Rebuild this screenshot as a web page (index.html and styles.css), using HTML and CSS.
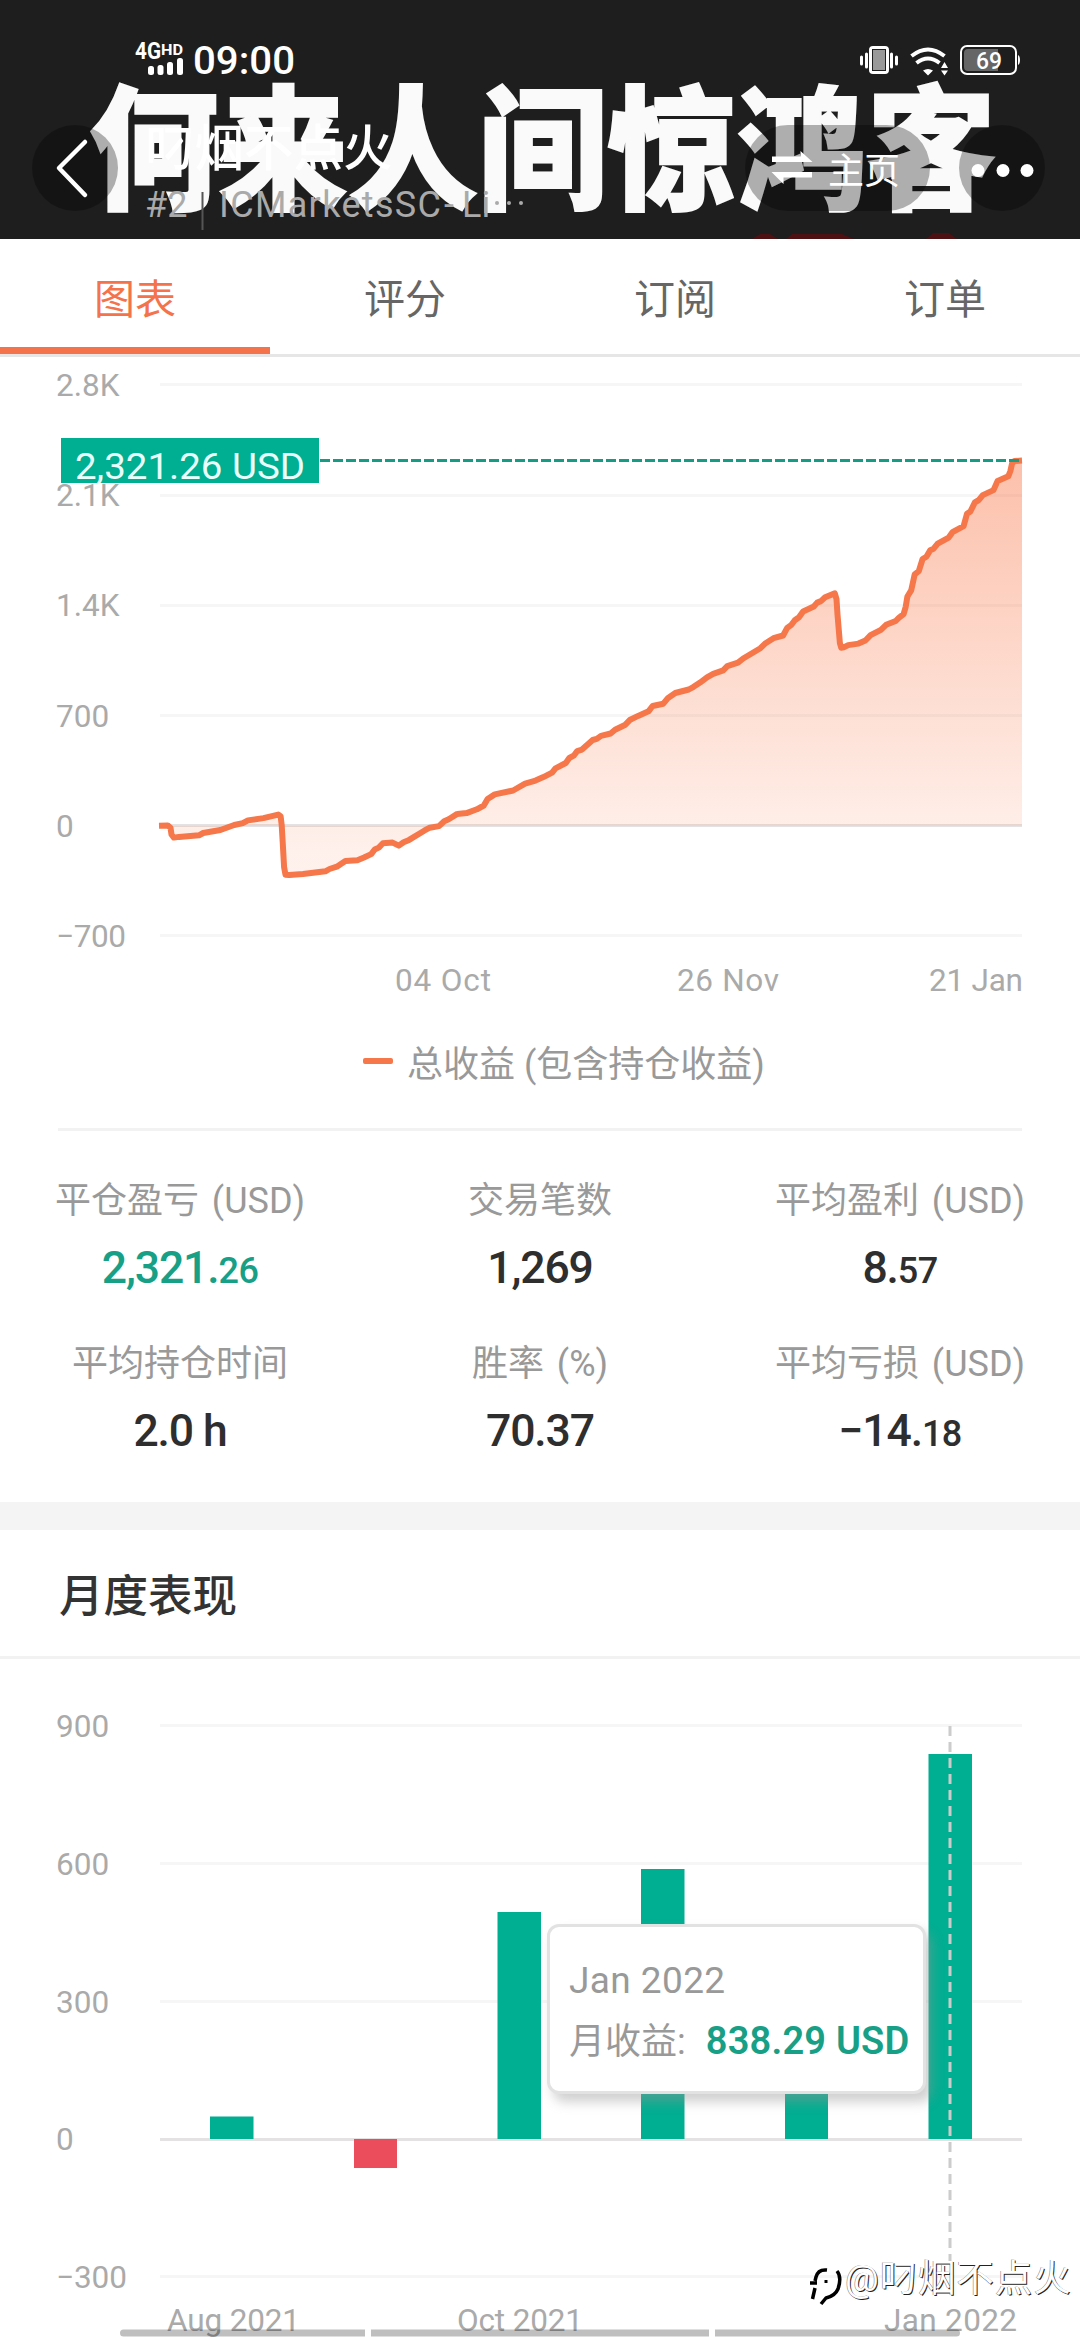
FILE: index.html
```html
<!DOCTYPE html>
<html lang="zh-CN">
<head>
<meta charset="utf-8">
<title>图表</title>
<link rel="stylesheet" href="styles.css">
</head>
<body>
<div class="screen">
  <header class="hero">
    <svg class="banner" width="1080" height="239" viewBox="0 0 1080 239">
      <text x="89" y="199" textLength="907" lengthAdjust="spacingAndGlyphs">何来人间惊鸿客</text>
      <path class="banner-red" d="M752 239l8-5h10l8 5zM786 239l6-5h50l12 5zM926 239l7-6h16l8 6z"/>
    </svg>

    <div class="status">
      <svg width="170" height="40" viewBox="130 40 170 40" fill="#fff">
        <text class="net" x="135" y="59" textLength="26" lengthAdjust="spacingAndGlyphs">4G</text>
        <text class="hd" x="161" y="55" textLength="22" lengthAdjust="spacingAndGlyphs">HD</text>
        <rect x="148" y="66" width="6" height="9" rx="2.500"/>
        <rect x="157.500" y="65" width="6" height="10" rx="2.500"/>
        <rect x="167" y="62" width="6" height="13" rx="2.500"/>
        <rect x="177" y="58" width="6" height="17" rx="2.500"/>
        <text class="time" x="193" y="74" textLength="102" lengthAdjust="spacingAndGlyphs">09:00</text>
      </svg>
      <svg width="170" height="40" viewBox="855 40 170 40" fill="#fff">
        <rect x="870.500" y="47.500" width="17" height="25" rx="2.500" fill="#999" stroke="#fff" stroke-width="3"/>
        <rect x="872.500" y="49.500" width="13" height="21" fill="none" stroke="#1e1e1e" stroke-width="1"/>
        <path d="M866.500 54v13M861.500 57v7M891.500 54v13M896.500 57v7" stroke="#fff" stroke-width="3" stroke-linecap="round"/>
        <g fill="none" stroke="#fff" stroke-width="4">
          <path d="M911.500 56q16.500-13 33 0"/><path d="M916.500 63q11.500-9 23 0"/>
        </g>
        <path d="M923 70.500q5-3 10 0l-5 5zM941 68l3.500-6 3.500 6zM941 70.500h7l-3.500 5z"/>
        <rect x="961" y="46" width="55" height="28" rx="6" fill="none" stroke="#fff" stroke-width="2"/>
        <path d="M968 49h30v22h-30q-4 0-4-4V53q0-4 4-4z" fill="#666"/>
        <path d="M1018 55q2 1 2 5t-2 5z"/>
        <text class="battery" x="976" y="68.500" textLength="26" lengthAdjust="spacingAndGlyphs">69</text>
      </svg>
    </div>

    <div class="appbar">
      <span class="round"><svg width="86" height="86" viewBox="32 125 86 86"><path d="M85 142L59 168l26 27" fill="none" stroke="#fff" stroke-width="4.500" stroke-linecap="round" stroke-linejoin="round"/></svg></span>
      <div class="who">
        <div class="nick">叼烟不点火</div>
        <svg width="400" height="40" viewBox="140 188 400 40">
          <text class="broker" y="217"><tspan x="145">#2</tspan><tspan x="219" textLength="222">ICMarketsSC</tspan><tspan x="444">-</tspan><tspan x="462">Li</tspan></text>
          <path d="M202.500 192v38" stroke="#555" stroke-width="2"/>
          <g fill="#aaa"><circle cx="497" cy="203" r="2"/><circle cx="509" cy="203" r="2"/><circle cx="521" cy="203" r="2"/></g>
        </svg>
      </div>
      <span class="pill">
        <svg width="42" height="42" viewBox="771 150 42 42"><path d="M772 157.500h28.500v-5.500l12 11H772zM812 178.500h-28.500v6.500l-12-12H812z" transform="translate(0 2)" fill="#fff"/></svg>
        主页
      </span>
      <span class="round"><svg width="86" height="86" viewBox="959 125 86 86" fill="#fff"><circle cx="978" cy="170.500" r="6.500"/><circle cx="1003" cy="170.500" r="6.500"/><circle cx="1027" cy="170.500" r="6.500"/></svg></span>
    </div>
  </header>

  <nav class="tabs">
    <a class="tab active">图表</a><a class="tab">评分</a><a class="tab">订阅</a><a class="tab">订单</a>
  </nav>

  <section class="profit">
    <svg class="chart" width="1080" height="653" viewBox="0 357 1080 653">
      <defs>
        <linearGradient id="area" x1="0" y1="460" x2="0" y2="875" gradientUnits="userSpaceOnUse">
          <stop offset="0" stop-color="#f9703f" stop-opacity=".44"/>
          <stop offset=".88" stop-color="#f9703f" stop-opacity=".12"/>
          <stop offset="1" stop-color="#f9703f" stop-opacity=".09"/>
        </linearGradient>
      </defs>
      <path class="grid" d="M160 384.500H1022M160 495.500H1022M160 605.500H1022M160 715.500H1022M160 935.500H1022"/>
      <path class="zero" d="M160 825.500H1022"/>
      <path fill="url(#area)" d="M159 825.700 167.700 825.400 170.500 827.700 171.500 834.500 173.900 837.600 199 835.300 203.200 833 220.400 830 234.200 825 247.900 820.400 278.200 814.600 280.600 816.200 281.700 825 284.100 867.100 285.500 874.700 303 874 325.400 871.300 345.400 861 357.400 860.200 371.200 854.100 382.900 843.300 392.600 842.600 398.800 845.600 409.100 839.900 429.800 827.700 439 826.100 457.300 813.900 466.600 813.100 483.800 805.500 487.600 799 494.800 794.400 513.100 790.500 540 777.900 565.800 763 573.700 755.700 592.700 740 610.600 733.500 630.200 719.700 652.600 706 663.300 703.700 675.300 693 688.800 689.500 713.200 673.800 738 662.700 765.600 643.200 783.100 635.500 791.400 624.800 803.100 611.400 825.100 597.300 834.800 593.400 836.500 599.200 839.900 643.200 841.300 647.800 858.500 643.600 880.900 629.800 895.700 621 903.600 614.100 907.400 596.500 911.200 590.400 914.700 574.300 922.600 559 937.700 543.700 948.700 537.600 963.600 526.100 970.400 511.500 982.800 495.100 993.500 490.100 997.600 480.900 1008.300 476.300 1014.500 461 1022 460.600V825.700z"/>
      <path class="line" d="M159 825.700 167.700 825.400 170.500 827.700 171.500 834.500 173.900 837.600 179 836.900 199 835.300 203.200 833 220.400 830 234.200 825 242.800 823.100 247.900 820.400 263.400 818.100 278.200 814.600 280.600 816.200 281.700 825 282.700 842.200 284.100 867.100 285.500 874.700 289.300 875.100 303 874 325.400 871.300 329.500 869 336.800 866.700 345.400 861 357.400 860.200 364 857.500 371.200 854.100 374.700 849.500 378.800 847.600 382.900 843.300 392.600 842.600 398.800 845.600 403.600 842.200 409.100 839.900 424.200 830.700 429.800 827.700 439 826.100 444.200 821.200 448.700 819.200 457.300 813.900 466.600 813.100 476.900 809.300 483.800 805.500 487.600 799 494.800 794.400 513.100 790.500 525.100 783.600 535.500 780.600 543.400 777.100 552.100 772.600 555.500 768.300 565.800 763 569.300 758 573.700 755.700 577.200 751.100 582 749.600 592.700 740 596.800 738.900 601 735.800 610.600 733.500 615.100 729.700 625.400 724.700 630.200 719.700 638.100 715.900 648.500 711.300 652.600 706 663.300 703.700 668.100 697.900 675.300 693 688.800 689.500 693.600 686.800 700.100 682.600 707 677.300 713.200 673.800 723.200 670.400 727.300 666.200 738 662.700 743.200 658.500 760.400 648.200 765.600 643.200 773.500 638.200 783.100 635.500 787.200 627.900 791.400 624.800 794.800 620.200 799 617.200 803.100 611.400 813.800 606.500 817.200 602.600 821 601.100 825.100 597.300 834.800 593.400 836.500 599.200 837.500 614.500 839.900 643.200 841.300 647.800 843.700 647.400 848.200 645.100 858.500 643.600 865.400 640.500 870.600 635.200 880.900 629.800 886.100 624.800 895.700 621 898.800 617.900 903.600 614.100 905.700 606.800 907.400 596.500 911.200 590.400 914.700 574.300 918.800 571.200 922.600 559 926.400 556.700 930.200 550.200 933.600 548.700 937.700 543.700 948.700 537.600 952.500 532.200 963.600 526.100 967 513.800 970.400 511.500 974.900 502.400 978.700 500.100 982.800 495.100 993.500 490.100 997.600 480.900 1008.300 476.300 1010.400 471 1012.100 463.300 1014.500 461 1022 460.600"/>
      <path class="mark" d="M320 460.500H1022"/>
      <g class="axis">
        <text x="56" y="396">2.8K</text><text x="56" y="506">2.1K</text><text x="56" y="616">1.4K</text><text x="56" y="726.500">700</text><text x="56" y="836.500">0</text>
        <text x="56" y="947" textLength="70">−700</text>
        <text x="395" y="991" textLength="96">04 Oct</text><text x="677" y="991" textLength="102">26 Nov</text><text x="929" y="991" textLength="94">21 Jan</text>
      </g>
      <rect x="61" y="438" width="258" height="45" fill="#00ae91"/>
      <text class="tag" x="75" y="478.500" textLength="230" lengthAdjust="spacingAndGlyphs">2,321.26 USD</text>
    </svg>
    <div class="legend"><i></i>总收益 (包含持仓收益)</div>
    <div class="stats">
      <div class="stat"><span>平仓盈亏 (USD)</span><b class="up">2,321.<small>26</small></b></div>
      <div class="stat"><span>交易笔数</span><b>1,269</b></div>
      <div class="stat"><span>平均盈利 (USD)</span><b>8.<small>57</small></b></div>
      <div class="stat"><span>平均持仓时间</span><b>2.0 h</b></div>
      <div class="stat"><span>胜率 (%)</span><b>70.37</b></div>
      <div class="stat"><span>平均亏损 (USD)</span><b>−14.<small>18</small></b></div>
    </div>
  </section>

  <section class="monthly">
    <h2>月度表现</h2>
    <div class="plot">
      <svg class="chart" width="1080" height="681" viewBox="0 1659 1080 681">
        <path class="grid" d="M160 1725.500H1022M160 1863.500H1022M160 2001.500H1022M160 2276.500H1022"/>
        <path class="zero" d="M160 2139.500H1022"/>
        <g fill="#00ae91">
          <rect x="210" y="2116.500" width="43.500" height="22.500"/>
          <rect x="497.500" y="1912" width="43.500" height="227"/>
          <rect x="641" y="1869" width="43.500" height="270"/>
          <rect x="785" y="2060" width="43" height="79"/>
          <rect x="928.500" y="1754" width="43.500" height="385"/>
        </g>
        <rect x="354" y="2139" width="43" height="29" fill="#ec4d5c"/>
        <path class="cursor" d="M950 1726V2262"/>
        <g class="axis">
          <text x="56" y="1737">900</text><text x="56" y="1874.500">600</text><text x="56" y="2012.500">300</text><text x="56" y="2150">0</text>
          <text x="56" y="2288" textLength="71">−300</text>
          <text x="167" y="2331" textLength="133">Aug 2021</text><text x="457" y="2331" textLength="126">Oct 2021</text><text x="884" y="2331" textLength="133">Jan 2022</text>
        </g>
        <g fill="#000" fill-opacity=".25">
          <path d="M123.500 2329.500H365v7H123.500a3.500 3.500 0 0 1 0-7zM371 2329.500h338v7H371zM715 2329.500h241.500a3.500 3.500 0 0 1 0 7H715z"/>
        </g>
      </svg>
      <div class="tip">
        <div class="tip-date">Jan 2022</div>
        <div>月收益:<b>838.29 USD</b></div>
      </div>
      <div class="watermark">
        <svg width="38" height="44" viewBox="805 2262 38 44">
          <g fill="none" stroke="#000" stroke-width="3.500">
            <path d="M827 2268q-9-1-11 7l-1 4M810 2281h7M815 2286l-2.500 11M837 2269q5 6 1 18-3 7-12 9l-5 6" />
          </g>
          <path d="M826 2278v3" stroke="#000" stroke-width="3"/>
        </svg>
        <span>@叼烟不点火</span>
      </div>
    </div>
  </section>
</div>
</body>
</html>
```
FILE: styles.css
```css
body {
  margin: 0;
  background: #fff;
  font-family: Roboto, "Noto Sans CJK SC", sans-serif;
}
.screen {
  width: 1080px;
  height: 2340px;
  overflow: hidden;
}
svg { display: block; }

/* header */
.hero {
  position: relative;
  height: 239px;
  background: #1e1e1e;
  overflow: hidden;
}
.banner { position: absolute; left: 0; top: 0; }
.banner text {
  font: 900 134px "Noto Sans CJK SC", sans-serif;
  fill: #fafafa;
  stroke: #fafafa;
  stroke-width: 2px;
}
.banner-red { fill: #4d1013; }
.status {
  position: relative;
  display: flex;
  justify-content: space-between;
  padding: 40px 55px 0 130px;
}
.status svg { overflow: visible; }
.net { font-size: 23px; font-weight: 700; }
.hd { font-size: 15.5px; font-weight: 700; }
.time { font-size: 38.5px; font-weight: 500; }
.battery { font-size: 23px; font-weight: 500; }
.appbar {
  position: relative;
  display: flex;
  align-items: flex-start;
  padding: 45px 35px 0 32px;
}
.round {
  flex: none;
  width: 86px;
  height: 86px;
  border-radius: 43px;
  background: rgba(0, 0, 0, .3);
}
.who {
  width: 400px;
  margin: -10px 0 0 22px;
}
.nick {
  height: 73px;
  padding-left: 5px;
  line-height: 68px;
  font-size: 49.5px;
  font-weight: 500;
  color: #fff;
}
.who svg { overflow: visible; }
.broker { font-size: 36px; fill: #aaa; }
.pill {
  display: flex;
  align-items: center;
  gap: 15px;
  box-sizing: border-box;
  width: 185px;
  height: 86px;
  margin: 0 29px 0 205px;
  padding-left: 26px;
  border-radius: 43px;
  background: rgba(0, 0, 0, .3);
  color: #fff;
  font-size: 36px;
  white-space: nowrap;
}
.pill svg { flex: none; }

/* tabs */
.tabs {
  display: flex;
  box-sizing: border-box;
  height: 118px;
  border-bottom: 3px solid #e6e6e6;
}
.tab {
  flex: 1;
  box-sizing: border-box;
  height: 115px;
  border-bottom: 7px solid transparent;
  line-height: 122px;
  text-align: center;
  font-size: 41px;
  color: #666;
}
.tab.active { color: #f5734a; border-color: #f5734a; }

/* charts */
.grid { stroke: #f6f6f6; stroke-width: 3; }
.zero { stroke: #e4e2e2; stroke-width: 3; }
.line { fill: none; stroke: #f5774a; stroke-width: 6; stroke-linejoin: round; }
.mark { stroke: #169c84; stroke-width: 3; stroke-dasharray: 10 3; }
.cursor { stroke: #ccc; stroke-width: 3; stroke-dasharray: 10 6; }
.axis text { font-size: 31.5px; fill: #aaa; }
.tag { font-size: 37px; fill: #e8fffb; }

.legend {
  display: flex;
  align-items: center;
  justify-content: center;
  gap: 14px;
  box-sizing: border-box;
  height: 121px;
  margin: 0 58px;
  padding: 0 0 16px 48px;
  border-bottom: 3px solid #f2f2f2;
  font-size: 36px;
  color: #999;
}
.legend i { width: 30px; height: 6px; border-radius: 2px; background: #f5774a; }

.stats {
  display: grid;
  grid-template-columns: repeat(3, 360px);
  grid-auto-rows: 163px;
  box-sizing: border-box;
  height: 371px;
  padding-top: 31px;
}
.stat {
  display: flex;
  flex-direction: column;
  align-items: center;
  color: #999;
  font-size: 36px;
  line-height: 78px;
}
.stat span { word-spacing: 4px; }
.stat b {
  margin-top: -7px;
  font-size: 44.5px;
  font-weight: 500;
  line-height: 70px;
  letter-spacing: -1.1px;
  color: #2e2e2e;
}
.stat small { font-size: 36px; letter-spacing: -.6px; }
.stat .up { color: #17a086; }

.monthly { border-top: 28px solid #f4f4f4; }
.monthly h2 {
  margin: 0;
  padding-left: 59px;
  height: 126px;
  line-height: 134px;
  border-bottom: 3px solid #f2f2f2;
  font-size: 44.5px;
  font-weight: 500;
  color: #333;
}
.plot { position: relative; }
.tip {
  position: absolute;
  left: 547px;
  top: 265px;
  box-sizing: border-box;
  width: 379px;
  height: 170px;
  padding: 24px 0 0 19px;
  border: 3px solid #e2e2e2;
  border-radius: 12px;
  background: #fff;
  box-shadow: 6px 8px 12px rgba(150, 150, 150, .45);
  font-size: 36px;
  line-height: 60px;
  white-space: nowrap;
  color: #999;
}
.tip .tip-date { font-size: 37px; letter-spacing: .4px; }
.tip b {
  margin-left: 20px;
  font-size: 38px;
  font-weight: 600;
  letter-spacing: .2px;
  color: #17a086;
}
.watermark {
  position: absolute;
  left: 805px;
  top: 589px;
  display: flex;
  align-items: center;
  gap: 2px;
  font-size: 37.5px;
  line-height: 56px;
  letter-spacing: .9px;
  color: #fff;
  text-shadow: 1px 1px 0 #222, -.5px 0 0 #777;
  white-space: nowrap;
}
.watermark svg { margin-top: 16px; }
```
